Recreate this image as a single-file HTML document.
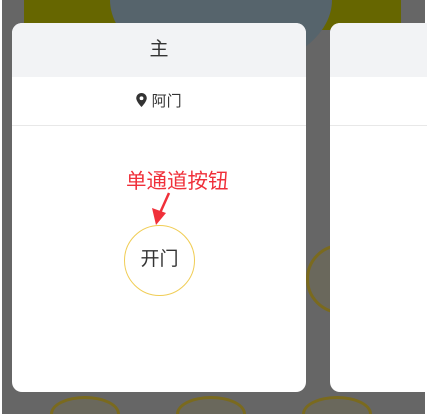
<!DOCTYPE html>
<html><head><meta charset="utf-8"><style>
*{margin:0;padding:0;box-sizing:border-box}
html,body{width:427px;height:417px;overflow:hidden}
body{background:#fff;position:relative;font-family:"Liberation Sans","Noto Sans CJK SC",sans-serif}
.bg{position:absolute;left:2px;top:0;width:423px;height:414px;background:#666;overflow:hidden}
.ol{position:absolute;left:22px;top:0;width:377px;height:30px;background:#666600}
.circ{position:absolute;left:108px;top:0;width:222px;height:72px;border-radius:0 0 111px 111px/0 0 72px 72px;background:#56646c}
.card{position:absolute;top:23px;background:#fff;border-radius:10px;overflow:hidden}
.hd{height:54px;background:#f2f3f5;text-align:center;line-height:54px;font-size:19px;color:#333}
.loc{height:49px;border-bottom:1px solid #e8e8e8;text-align:center;line-height:49px;font-size:15px;color:#333}
.btn{position:absolute;left:112px;top:202px;width:71px;height:71px;border-radius:50%;border:1.5px solid #f0cd55;text-align:center;line-height:68px;font-size:19px;color:#333}
.coin{position:absolute;width:70px;height:18px;border-radius:35px 35px 0 0/18px 18px 0 0;border:3px solid #7a6a1e;border-bottom:none;background:#6a685c}
</style></head><body>
<div class="bg">
<div class="ol"></div>
<div class="circ"></div>
<div class="coin" style="left:48px;top:396px"></div>
<div class="coin" style="left:174px;top:396px"></div>
<div class="coin" style="left:300px;top:396px"></div>
<div class="coin" style="left:304px;top:244px;height:70px;border-radius:50%;border-bottom:3px solid #7a6a1e"></div>
</div>
<div class="card" style="left:12px;width:294px;height:369px">
<div class="hd">主</div>
<div class="loc"><svg width="11" height="14" viewBox="0 0 12 16" style="vertical-align:-1px"><path d="M6 0C2.7 0 0 2.6 0 5.9 0 10 6 16 6 16s6-6 6-10.1C12 2.6 9.3 0 6 0z" fill="#333"/><circle cx="6" cy="6" r="2.2" fill="#fff"/></svg> 阿门</div>
<div style="position:absolute;left:114px;top:141px;font-size:20.5px;color:#f0303a;white-space:nowrap">单通道按钮</div>
<svg style="position:absolute;left:0;top:0" width="294" height="369"><line x1="157" y1="170" x2="148" y2="190" stroke="#f0303a" stroke-width="2.5"/><polygon points="144,202 140,185 154,190" fill="#f0303a"/></svg>
<div class="btn">开门</div>
</div>
<div style="position:absolute;left:330px;top:23px;width:97px;height:369px;background:#fff;border-radius:10px 0 0 10px;overflow:hidden"><div class="hd"></div><div class="loc"></div></div>
</body></html>
